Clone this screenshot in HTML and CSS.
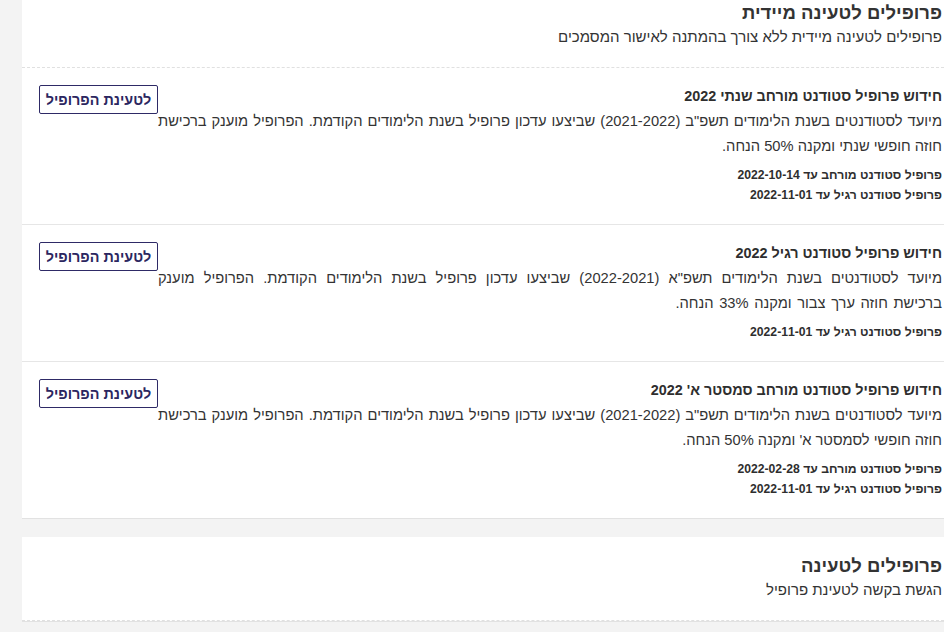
FILE: index.html
```html
<!DOCTYPE html>
<html lang="he" dir="rtl">
<head>
<meta charset="utf-8">
<title>פרופילים</title>
<link rel="stylesheet" href="styles.css">
</head>
<body>
<div class="page">
  <section class="card">
    <header class="card-head">
      <h2 class="card-title">פרופילים לטעינה מיידית</h2>
      <p class="card-sub">פרופילים לטעינה מיידית ללא צורך בהמתנה לאישור המסמכים</p>
    </header>
    <ul class="items">
      <li class="item">
        <div class="item-body">
          <h3 class="item-title">חידוש פרופיל סטודנט מורחב שנתי 2022</h3>
          <p class="item-desc">מיועד לסטודנטים בשנת הלימודים תשפ"ב (2021-2022) שביצעו עדכון פרופיל בשנת הלימודים הקודמת. הפרופיל מוענק ברכישת חוזה חופשי שנתי ומקנה 50% הנחה.</p>
          <div class="item-meta">
            <div>פרופיל סטודנט מורחב עד 2022-10-14</div>
            <div>פרופיל סטודנט רגיל עד 2022-11-01</div>
          </div>
        </div>
        <button class="load-btn" type="button">לטעינת הפרופיל</button>
      </li>
      <li class="item">
        <div class="item-body">
          <h3 class="item-title">חידוש פרופיל סטודנט רגיל 2022</h3>
          <p class="item-desc item-desc--loose">מיועד לסטודנטים בשנת הלימודים תשפ"א (2022-2021) שביצעו עדכון פרופיל בשנת הלימודים הקודמת. הפרופיל מוענק ברכישת חוזה ערך צבור ומקנה 33% הנחה.</p>
          <div class="item-meta">
            <div>פרופיל סטודנט רגיל עד 2022-11-01</div>
          </div>
        </div>
        <button class="load-btn" type="button">לטעינת הפרופיל</button>
      </li>
      <li class="item">
        <div class="item-body">
          <h3 class="item-title">חידוש פרופיל סטודנט מורחב סמסטר א' 2022</h3>
          <p class="item-desc">מיועד לסטודנטים בשנת הלימודים תשפ"ב (2021-2022) שביצעו עדכון פרופיל בשנת הלימודים הקודמת. הפרופיל מוענק ברכישת חוזה חופשי לסמסטר א' ומקנה 50% הנחה.</p>
          <div class="item-meta">
            <div>פרופיל סטודנט מורחב עד 2022-02-28</div>
            <div>פרופיל סטודנט רגיל עד 2022-11-01</div>
          </div>
        </div>
        <button class="load-btn" type="button">לטעינת הפרופיל</button>
      </li>
    </ul>
  </section>
  <section class="card">
    <header class="card-head">
      <h2 class="card-title">פרופילים לטעינה</h2>
      <p class="card-sub">הגשת בקשה לטעינת פרופיל</p>
    </header>
    <ul class="items"></ul>
  </section>
</div>
</body>
</html>
```

FILE: styles.css
```css
html, body {
  margin: 0;
  padding: 0;
}
body {
  background: #f3f3f3;
  font-family: "Liberation Sans", Arial, sans-serif;
  color: #333;
  overflow: hidden;
}
.page {
  margin-top: -16px;
  margin-left: 22px;
  display: flex;
  flex-direction: column;
  gap: 18px;
}
.card {
  background: #fff;
  border-bottom: 1px solid #e2e2e2;
}
.card-head {
  padding: 16px 2px 19px 17px;
  border-bottom: 1px dashed #e0e0e0;
}
.card-title {
  margin: 0;
  font-size: 18.5px;
  line-height: 26px;
  font-weight: bold;
  color: #333;
}
.card-sub {
  margin: 0;
  font-size: 15px;
  line-height: 22px;
  color: #333;
}
.items {
  list-style: none;
  margin: 0;
  padding: 0;
}
.item {
  display: flex;
  align-items: flex-start;
  padding: 17px 2px 19px 17px;
  border-bottom: 1px solid #e6e6e6;
}
.item:last-child {
  border-bottom: none;
}
.item-body {
  flex: 1;
}
.item-title {
  margin: 0;
  font-size: 14.4px;
  line-height: 22px;
  font-weight: bold;
  color: #2e2e2e;
}
.item-desc {
  margin: 2px 0 0;
  font-size: 14.7px;
  line-height: 25px;
  color: #333;
  text-align: justify;
}
.item-desc--loose {
  word-spacing: 1.5px;
}
.item-meta {
  margin-top: 6px;
  font-size: 12.2px;
  line-height: 20px;
  font-weight: bold;
  color: #2e2e2e;
}
.load-btn {
  flex: none;
  width: 119px;
  height: 29px;
  padding: 0;
  background: #fff;
  border: 1px solid #2e2a66;
  border-radius: 2px;
  color: #2b2660;
  font-family: "Liberation Sans", Arial, sans-serif;
  font-size: 14.4px;
  font-weight: bold;
  cursor: pointer;
}
```
